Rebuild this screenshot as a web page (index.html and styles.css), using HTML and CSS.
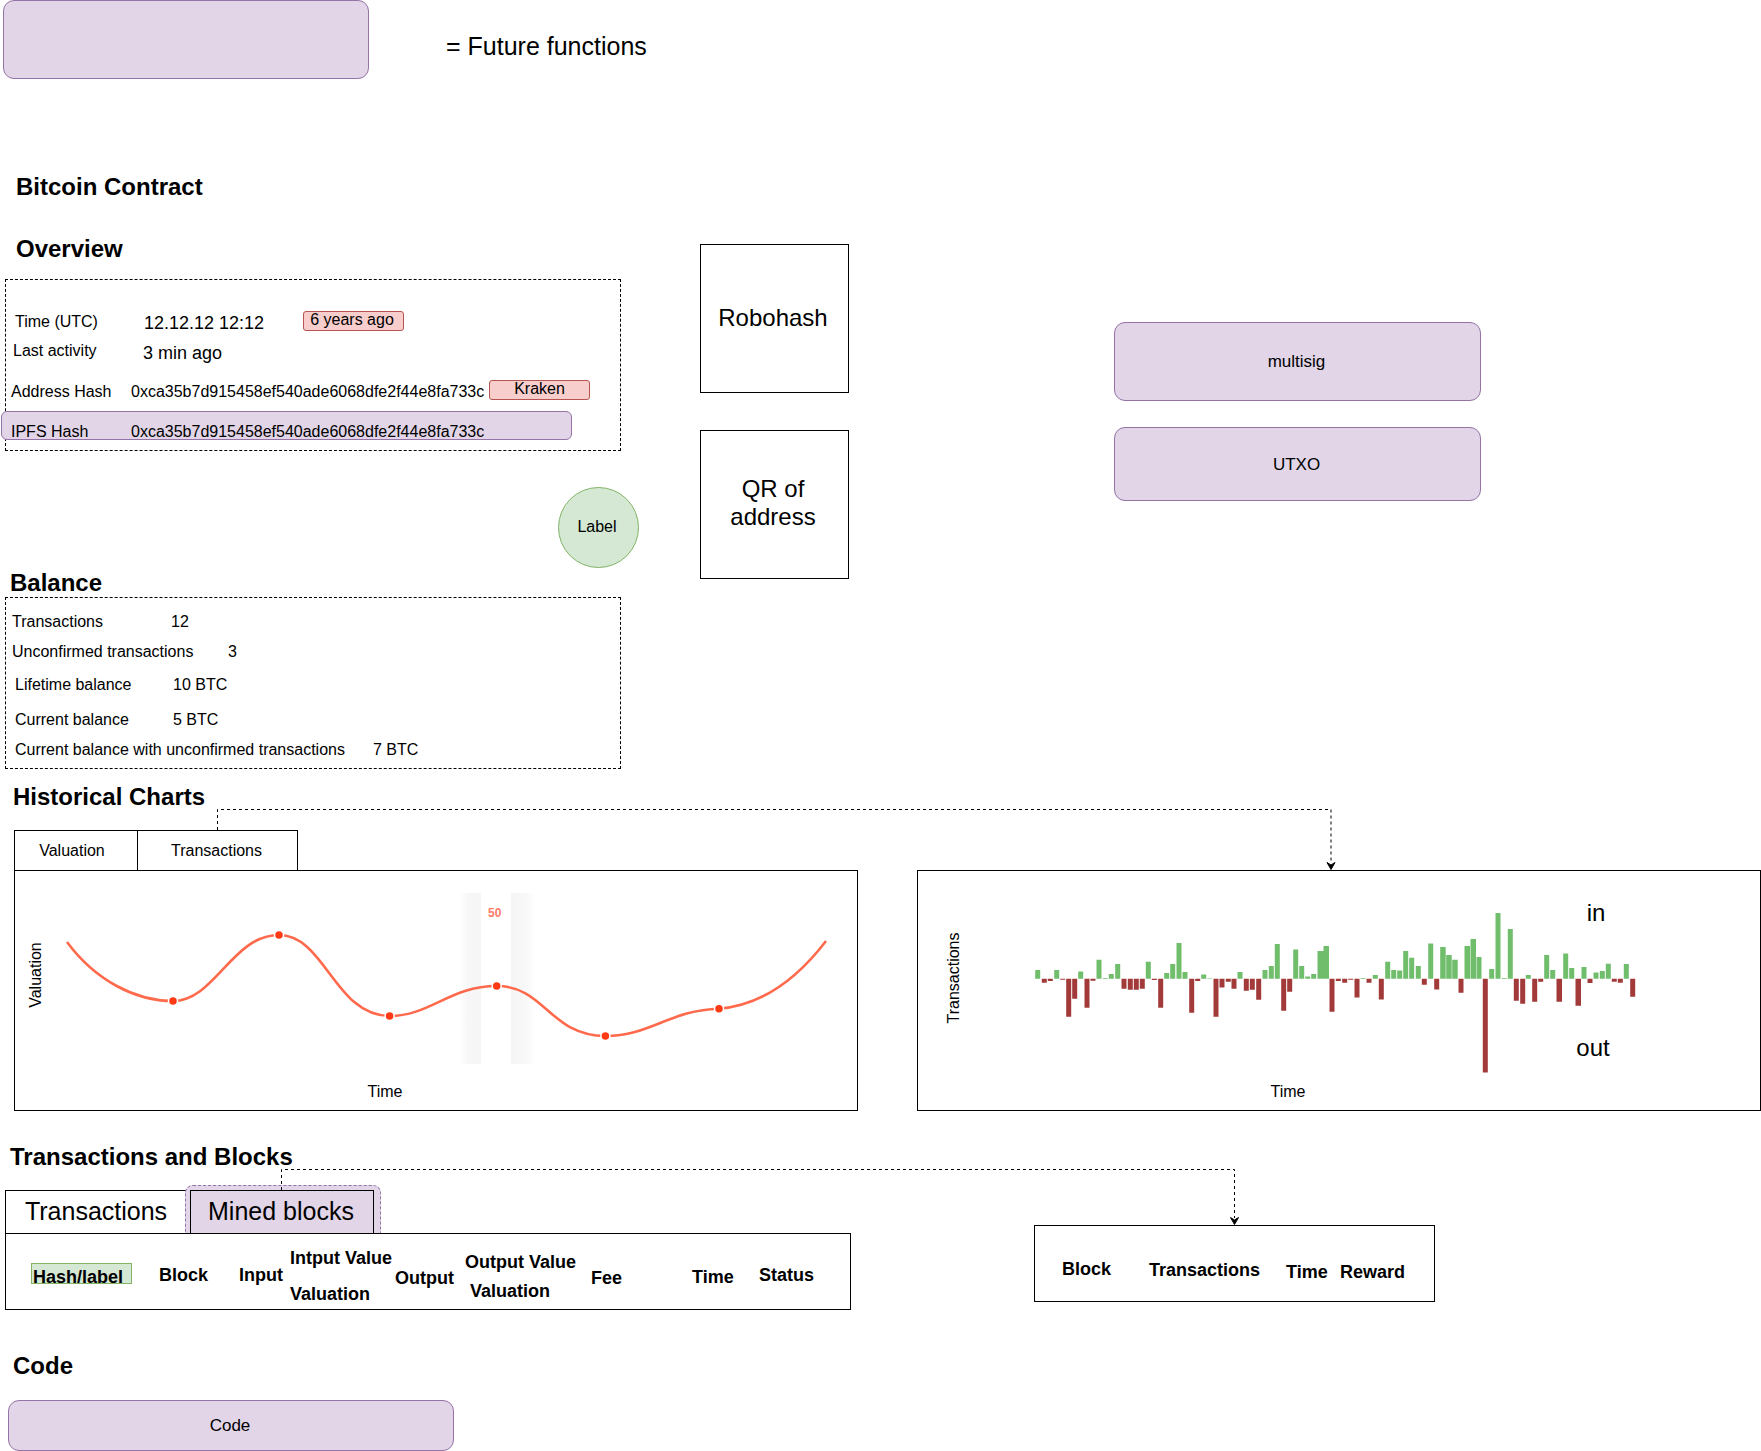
FILE: index.html
```html
<!DOCTYPE html>
<html lang="en">
<head>
<meta charset="utf-8">
<title>Bitcoin Contract</title>
<link rel="stylesheet" href="styles.css">
</head>
<body>
<main class="canvas">
  <div class="node future legend"></div>
  <div class="t h-legend">= Future functions</div>

  <h1 class="t title title-contract">Bitcoin Contract</h1>
  <h2 class="t title title-overview">Overview</h2>

  <section class="node dashed overview-box"></section>
  <div class="t s16 a1">Time (UTC)</div>
  <div class="t s18 a2">12.12.12 12:12</div>
  <div class="node pill pill-age">6 years ago</div>
  <div class="t s16 b1">Last activity</div>
  <div class="t s18 b2">3 min ago</div>
  <div class="t s16 c1">Address Hash</div>
  <div class="t s16 c2">0xca35b7d915458ef540ade6068dfe2f44e8fa733c</div>
  <div class="node pill pill-kraken">Kraken</div>
  <div class="node future ipfs-box"></div>
  <div class="t s16 d1">IPFS Hash</div>
  <div class="t s16 d2">0xca35b7d915458ef540ade6068dfe2f44e8fa733c</div>
  <div class="node label-circle">Label</div>

  <div class="node plain robohash">Robohash</div>
  <div class="node plain qr">QR of<br>address</div>
  <div class="node future multisig">multisig</div>
  <div class="node future utxo">UTXO</div>

  <h2 class="t title title-balance">Balance</h2>
  <section class="node dashed balance-box"></section>
  <div class="t s16 e1">Transactions</div><div class="t s16 e2">12</div>
  <div class="t s16 f1">Unconfirmed transactions</div><div class="t s16 f2">3</div>
  <div class="t s16 g1">Lifetime balance</div><div class="t s16 g2">10 BTC</div>
  <div class="t s16 h1">Current balance</div><div class="t s16 h2">5 BTC</div>
  <div class="t s16 i1">Current balance with unconfirmed transactions</div><div class="t s16 i2">7 BTC</div>

  <h2 class="t title title-charts">Historical Charts</h2>
  <div class="node plain tab16 tab-valuation">Valuation</div>
  <div class="node plain tab16 tab-transactions">Transactions</div>

  <div class="node plain chart chart-left">
    <svg class="fill" viewBox="15 871 842 239" aria-hidden="true">
      <defs>
        <linearGradient id="fadeL" x1="0" x2="1" y1="0" y2="0"><stop offset="0" stop-color="#f6f6f6" stop-opacity="0"/><stop offset="0.35" stop-color="#f7f7f7"/><stop offset="1" stop-color="#f6f6f6"/></linearGradient>
        <linearGradient id="fadeR" x1="0" x2="1" y1="0" y2="0"><stop offset="0" stop-color="#f5f5f5"/><stop offset="0.6" stop-color="#f8f8f8"/><stop offset="1" stop-color="#f8f8f8" stop-opacity="0"/></linearGradient>
      </defs>
      <rect x="460" y="893" width="21" height="171" fill="url(#fadeL)"/>
      <rect x="511" y="893" width="24" height="171" fill="url(#fadeR)"/>
      <path class="curve" d="M67 942C95 980 135 1001 173 1001C215 1001 232 935 279 935C325 935 335 1016 389.6 1016C430 1016 450 986 496.7 986C545 986 550 1036 605.4 1036C650 1036 670 1010 719 1008.7C765 1005 800 975 826 941"/>
      <g class="dots">
        <circle cx="173" cy="1001" r="4.500"/><circle cx="279" cy="935" r="4.500"/><circle cx="389.6" cy="1016" r="4.500"/><circle cx="496.7" cy="986" r="4.500"/><circle cx="605.4" cy="1036" r="4.500"/><circle cx="719" cy="1008.7" r="4.500"/>
      </g>
    </svg>
  </div>
  <div class="t fifty">50</div>
  <div class="t s16 c rot lbl-val">Valuation</div>
  <div class="t s16 c lbl-time1">Time</div>

  <div class="node plain chart chart-right">
    <svg class="fill" viewBox="918 871 842 239" aria-hidden="true">
      <path class="bar-in" d="M1035.2 978.7v-8.7h5v8.7zM1054.2 978.7v-8.7h5v8.7zM1078.2 978.7v-7.3h5v7.3zM1096.5 978.7v-19h5v19zM1102.8 978.7v-.7h5v.7zM1108.8 978.7v-4.7h5v4.7zM1115.2 978.7v-14.7h5v14.7zM1145.8 978.7v-17h5v17zM1164.2 978.7v-5.7h5v5.7zM1170.2 978.7v-14.7h5v14.7zM1176.5 978.7v-35.7h5v35.7zM1182.5 978.7v-6.7h5v6.7zM1201.2 978.7v-4.3h5v4.3zM1207.2 978.7v-.5h5v.5zM1237.5 978.7v-6.7h5v6.7zM1262.5 978.7v-8.7h5v8.7zM1268.8 978.7v-12.7h5v12.7zM1274.8 978.7v-34.7h5v34.7zM1293.2 978.7v-29.3h5v29.3zM1299.2 978.7v-12.7h5v12.7zM1305.2 978.7v-2.3h5v2.3zM1311.2 978.7v-4.7h5v4.7zM1317.5 978.7v-27.7h6v27.7zM1323.5 978.7v-32.7h5.5v32.7zM1360.5 978.7v-.7h5v.7zM1372.8 978.7v-3.7h5v3.7zM1385.2 978.7v-17h5v17zM1391.2 978.7v-8.7h5v8.7zM1397.2 978.7v-8.3h5v8.3zM1403.2 978.7v-27.7h5v27.7zM1409.2 978.7v-21h5v21zM1415.8 978.7v-12.7h5v12.7zM1428.2 978.7v-35.3h5v35.3zM1440.2 978.7v-31.7h5.5v31.7zM1446.2 978.7v-23.7h5.5v23.7zM1452.2 978.7v-19h5.5v19zM1464.5 978.7v-32.7h5.5v32.7zM1470.5 978.7v-39.7h5.5v39.7zM1476.5 978.7v-21.7h5v21.7zM1489.2 978.7v-9.7h5v9.7zM1495.5 978.7v-65.7h5v65.7zM1501.8 978.7v-.7h5v.7zM1507.8 978.7v-49.7h5v49.7zM1525.8 978.7v-3.7h5v3.7zM1544.2 978.7v-23.7h5v23.7zM1550.2 978.7v-8.7h5v8.7zM1563.2 978.7v-25.3h5v25.3zM1569.2 978.7v-10.7h5v10.7zM1581.5 978.7v-11.7h5v11.7zM1593.5 978.7v-6.3h5v6.3zM1599.8 978.7v-7.7h5v7.7zM1605.8 978.7v-15h5v15zM1623.8 978.7v-14.7h5v14.7z"/>
      <path class="bar-out" d="M1041.8 978.7v4h5v-4zM1047.8 978.7v2.3h5v-2.3zM1060.2 978.7v1h5v-1zM1066.2 978.7v38h5v-38zM1072.2 978.7v20h5v-20zM1084.5 978.7v29h5v-29zM1090.5 978.7v2h5v-2zM1121.5 978.7v10h5v-10zM1127.8 978.7v11h5v-11zM1133.8 978.7v11h5v-11zM1139.8 978.7v10h5v-10zM1151.8 978.7v1.3h5v-1.3zM1158.2 978.7v29h5v-29zM1189.2 978.7v34h5v-34zM1195.2 978.7v2.3h5v-2.3zM1213.5 978.7v38h5v-38zM1219.5 978.7v8.7h5v-8.7zM1225.8 978.7v3h5v-3zM1231.5 978.7v10h5v-10zM1243.8 978.7v12h5v-12zM1249.8 978.7v11h5v-11zM1256.2 978.7v21h5v-21zM1281.2 978.7v32h5v-32zM1287.2 978.7v13h5v-13zM1329.5 978.7v33h5v-33zM1335.8 978.7v2.3h5v-2.3zM1342.2 978.7v4h5v-4zM1348.2 978.7v1h5v-1zM1354.5 978.7v18.7h5v-18.7zM1366.5 978.7v4h5v-4zM1378.8 978.7v20.7h5v-20.7zM1421.8 978.7v6h5v-6zM1434.2 978.7v10.7h5v-10.7zM1458.5 978.7v14h5v-14zM1482.8 978.7v93.7h5v-93.7zM1513.8 978.7v22h5v-22zM1520.2 978.7v25h5v-25zM1532.2 978.7v23h5v-23zM1538.2 978.7v3h5v-3zM1556.5 978.7v23h5.5v-23zM1575.5 978.7v27h5.5v-27zM1587.5 978.7v4.3h5v-4.3zM1611.8 978.7v3h5v-3zM1617.8 978.7v4h5v-4zM1630.2 978.7v18h5v-18z"/>
    </svg>
  </div>
  <div class="t s16 c rot lbl-tx">Transactions</div>
  <div class="t s16 c lbl-time2">Time</div>
  <div class="t s24 c lbl-in">in</div>
  <div class="t s24 c lbl-out">out</div>

  <h2 class="t title title-tx">Transactions and Blocks</h2>
  <div class="node plain tab26 tab-tx">Transactions</div>
  <div class="node future dashed-future mined-halo"></div>
  <div class="node tab26 tab-mined">Mined blocks</div>
  <div class="node plain table-left"></div>
  <div class="node hash-bg"></div>
  <div class="t th j1">Hash/label</div>
  <div class="t th j2">Block</div>
  <div class="t th j3">Input</div>
  <div class="t th j4">Intput Value</div>
  <div class="t th j5">Valuation</div>
  <div class="t th j6">Output</div>
  <div class="t th j7">Output Value</div>
  <div class="t th j8">Valuation</div>
  <div class="t th j9">Fee</div>
  <div class="t th j10">Time</div>
  <div class="t th j11">Status</div>

  <div class="node plain table-right"></div>
  <div class="t th k1">Block</div>
  <div class="t th k2">Transactions</div>
  <div class="t th k3">Time</div>
  <div class="t th k4">Reward</div>

  <h2 class="t title title-code">Code</h2>
  <div class="node future code-box">Code</div>

  <svg class="wires" viewBox="0 0 1761 1451" aria-hidden="true">
    <path class="wire" d="M217.5 830V809.500H1331V863"/>
    <path class="head" d="M1327 862.500L1331 865L1335 862.500L1331 869.500Z"/>
    <path class="wire" d="M281.500 1190V1169.500H1234.500V1218"/>
    <path class="head" d="M1230.500 1217.500L1234.500 1220L1238.500 1217.500L1234.500 1224.500Z"/>
  </svg>
</main>
</body>
</html>
```

FILE: styles.css
```css
* { box-sizing: border-box; }
html, body { margin: 0; padding: 0; background: #fff; }
body { font-family: "Liberation Sans", Arial, sans-serif; color: #000; }

.canvas { position: relative; width: 1761px; height: 1451px; overflow: hidden; }

/* generic diagram pieces */
.node { position: absolute; display: flex; align-items: center; justify-content: center; text-align: center; }
.t { position: absolute; margin: 0; white-space: nowrap; font-weight: 400; line-height: 20px; }
.c { transform: translate(-50%, -50%); }
.rot { transform: translate(-50%, -50%) rotate(-90deg); }
.s16 { font-size: 16px; }
.s18 { font-size: 18px; }
.s24 { font-size: 24px; line-height: 28px; }
.th { font-size: 18px; font-weight: 700; }
.title { font-size: 24px; font-weight: 700; line-height: 28px; }
.future { background: #e1d5e7; border: 1px solid #9673a6; border-radius: 11px; font-size: 17px; }
.plain { background: #fff; border: 1px solid #000; }
.dashed { border: 1px dashed #000; }
.pill { background: #f8cecc; border: 1px solid #b85450; border-radius: 3px; font-size: 16px; padding-bottom: 3px; }
.fill { display: block; width: 100%; height: 100%; }

/* top */
.legend { left: 3px; top: 0; width: 366px; height: 79px; }
.h-legend { left: 446px; top: 32px; font-size: 25px; line-height: 28px; }
.title-contract { left: 16px; top: 173px; }
.title-overview { left: 16px; top: 235px; }

/* overview */
.overview-box { left: 5px; top: 279px; width: 616px; height: 172px; }
.a1 { left: 15px; top: 312px; }
.a2 { left: 144px; top: 313px; }
.pill-age { left: 303px; top: 311px; width: 101px; height: 20px; padding-right: 3px; }
.b1 { left: 13px; top: 341px; }
.b2 { left: 143px; top: 343px; }
.c1 { left: 11px; top: 382px; }
.c2 { left: 131px; top: 382px; }
.pill-kraken { left: 489px; top: 380px; width: 101px; height: 20px; }
.ipfs-box { left: 1px; top: 411px; width: 571px; height: 29px; border-radius: 6px; }
.d1 { left: 11px; top: 422px; }
.d2 { left: 131px; top: 422px; }
.label-circle { left: 558px; top: 487px; width: 81px; height: 81px; border-radius: 50%; background: #d5e8d4; border: 1px solid #82b366; font-size: 16px; padding: 0 3px 2px 0; }

/* side boxes */
.robohash { left: 700px; top: 244px; width: 149px; height: 149px; font-size: 24px; line-height: 27px; padding: 0 3px 2px 0; }
.qr { left: 700px; top: 430px; width: 149px; height: 149px; font-size: 24px; line-height: 28px; padding: 0 3px 3px 0; }
.multisig { left: 1114px; top: 322px; width: 367px; height: 79px; padding-right: 2px; }
.utxo { left: 1114px; top: 427px; width: 367px; height: 74px; padding: 1px 2px 0 0; }

/* balance */
.title-balance { left: 10px; top: 569px; }
.balance-box { left: 5px; top: 597px; width: 616px; height: 172px; }
.e1 { left: 12px; top: 612px; }
.e2 { left: 171px; top: 612px; }
.f1 { left: 12px; top: 642px; }
.f2 { left: 228px; top: 642px; }
.g1 { left: 15px; top: 675px; }
.g2 { left: 173px; top: 675px; }
.h1 { left: 15px; top: 710px; }
.h2 { left: 173px; top: 710px; }
.i1 { left: 15px; top: 740px; }
.i2 { left: 373px; top: 740px; }

/* charts */
.title-charts { left: 13px; top: 783px; }
.tab16 { font-size: 16px; }
.tab-valuation { left: 14px; top: 830px; width: 124px; height: 41px; padding: 0 8px 0 0; }
.tab-transactions { left: 137px; top: 830px; width: 161px; height: 41px; padding: 1px 2px 0 0; }
.chart { top: 870px; width: 844px; height: 241px; }
.chart-left { left: 14px; }
.chart-right { left: 917px; }
.lbl-val { left: 36px; top: 975px; }
.lbl-tx { left: 954px; top: 978px; }
.lbl-time1 { left: 385px; top: 1092px; }
.lbl-time2 { left: 1288px; top: 1092px; }
.lbl-in { left: 1596px; top: 913px; }
.lbl-out { left: 1593px; top: 1048px; }
.fifty { left: 488px; top: 903px; font-size: 12px; font-weight: 700; color: #ff7a68; }
.curve { fill: none; stroke: #ff6a4d; stroke-width: 2.6; }
.dots circle { fill: #ff3a14; stroke: #fff; stroke-width: 1.5; }
.bar-in { fill: #70bd6c; }
.bar-out { fill: #a33a3a; }

/* transactions and blocks */
.title-tx { left: 10px; top: 1143px; }
.tab26 { font-size: 25px; }
.tab-tx { left: 5px; top: 1190px; width: 184px; height: 44px; padding: 0 2px 2px 0; }
.mined-halo { left: 185px; top: 1185px; width: 196px; height: 55px; border-style: dashed; border-radius: 8px; }
.tab-mined { left: 190px; top: 1190px; width: 184px; height: 44px; border: 1px solid #000; padding: 0 2px 2px 0; }
.table-left { left: 5px; top: 1233px; width: 846px; height: 77px; }
.hash-bg { left: 31px; top: 1263px; width: 101px; height: 21px; background: #d5e8d4; border: 1px solid #82b366; }
.j1 { left: 33px; top: 1267px; }
.j2 { left: 159px; top: 1265px; }
.j3 { left: 239px; top: 1265px; }
.j4 { left: 290px; top: 1248px; }
.j5 { left: 290px; top: 1284px; }
.j6 { left: 395px; top: 1268px; }
.j7 { left: 465px; top: 1252px; }
.j8 { left: 470px; top: 1281px; }
.j9 { left: 591px; top: 1268px; }
.j10 { left: 692px; top: 1267px; }
.j11 { left: 759px; top: 1265px; }
.table-right { left: 1034px; top: 1225px; width: 401px; height: 77px; }
.k1 { left: 1062px; top: 1259px; }
.k2 { left: 1149px; top: 1260px; }
.k3 { left: 1286px; top: 1262px; }
.k4 { left: 1340px; top: 1262px; }

/* code */
.title-code { left: 13px; top: 1352px; }
.code-box { left: 8px; top: 1400px; width: 446px; height: 51px; padding-right: 2px; }

/* connectors */
.wires { position: absolute; left: 0; top: 0; width: 1761px; height: 1451px; pointer-events: none; }
.wire { fill: none; stroke: #000; stroke-width: 1; stroke-dasharray: 3 3; }
.head { fill: #000; stroke: #000; stroke-width: 1; }
```
